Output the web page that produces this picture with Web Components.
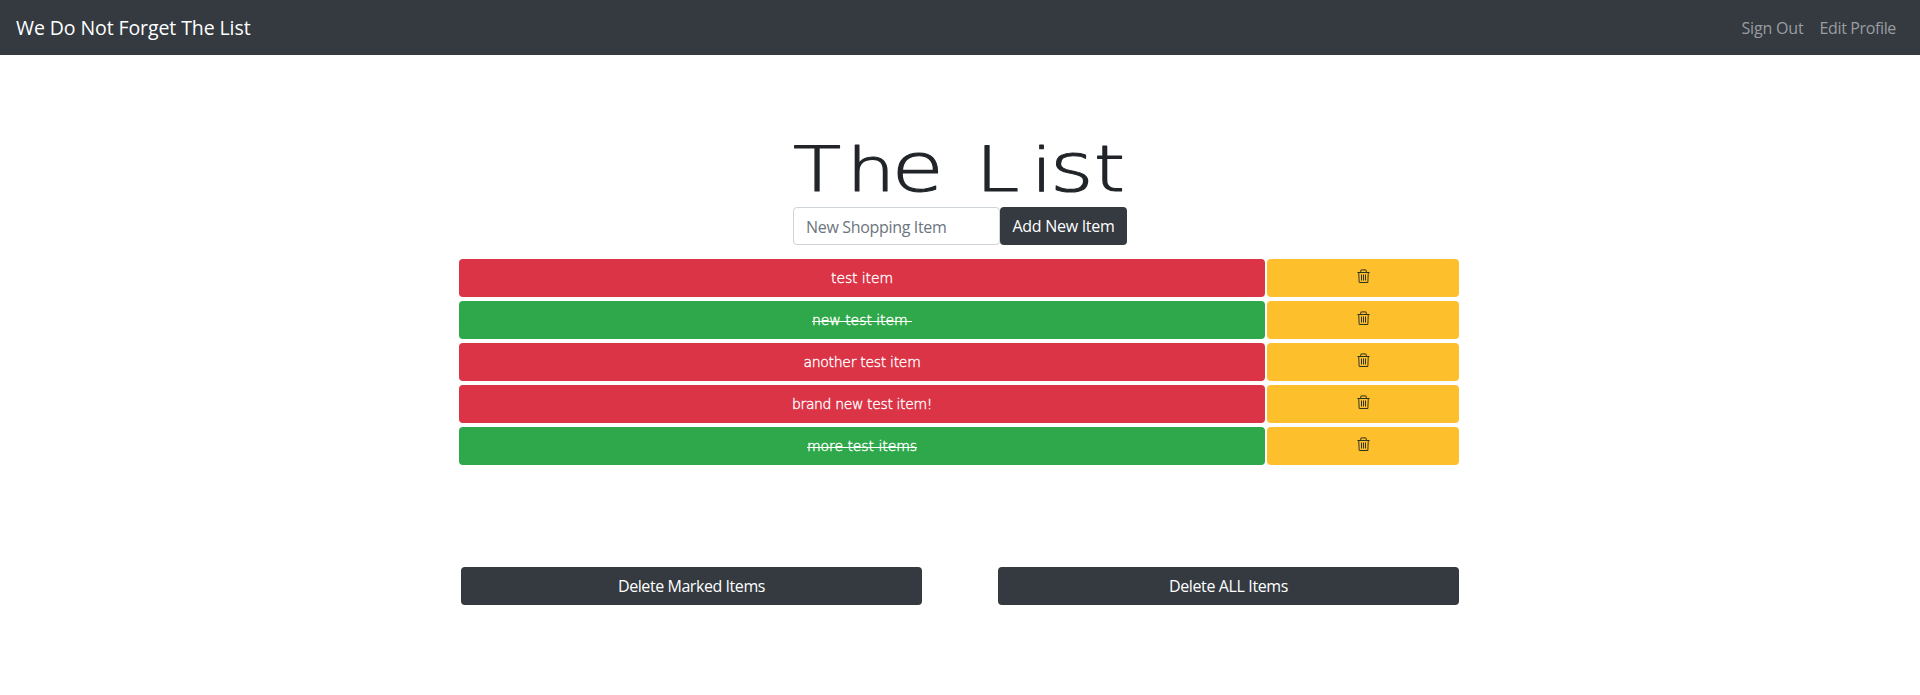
<!DOCTYPE html>
<html lang="en">
<head>
<meta charset="utf-8">
<title>We Do Not Forget The List</title>
<style>
body{margin:0;background:#fff;color:#212529;font:16px/24px "Open Sans","Noto Sans",sans-serif}
</style>
</head>
<body>
<list-app></list-app>
<script>
// Sets letter spacing so that the slotted text occupies a fixed width.
class FitText extends HTMLElement{
  connectedCallback(){
    if(this.shadowRoot)return;
    this.attachShadow({mode:'open'}).innerHTML=`<style>:host{display:inline-block;white-space:pre}span{display:inline-block}</style><span><slot></slot></span>`;
    const s=this.shadowRoot.querySelector('span'),w=+this.getAttribute('w');
    const n=this.textContent.length,natural=s.getBoundingClientRect().width;
    s.style.letterSpacing=((w-natural)/n).toFixed(4)+'px';
  }
}
class NavBar extends HTMLElement{
  constructor(){super();this.attachShadow({mode:'open'}).innerHTML=`<style>
:host{display:flex;box-sizing:border-box;height:55px;padding:0 24px 0 16px;background:#343a40;align-items:center;color:#fff}
.brand{font-size:19.5px;line-height:30px;margin-right:auto}
nav{display:flex;gap:16px;color:#9a9da0}
</style><div class="brand"><fit-text w="234.5">We Do Not Forget The List</fit-text></div>
<nav><fit-text w="62">Sign Out</fit-text><fit-text w="76.5">Edit Profile</fit-text></nav>`}
}
class DarkButton extends HTMLElement{
  constructor(){super();this.attachShadow({mode:'open'}).innerHTML=`<style>
:host{display:block}
button{display:block;box-sizing:border-box;width:100%;height:38px;border:0;border-radius:4px;background:#343a40;color:#fff;font:inherit;padding:0}
</style><button><slot></slot></button>`}
}
class ListTitle extends HTMLElement{
  constructor(){super();this.attachShadow({mode:'open'}).innerHTML=`<style>
:host{display:block}
svg{display:block;overflow:visible}
text{font-family:"DejaVu Sans Light","DejaVu Sans",sans-serif;font-weight:200;fill:#212529;stroke:#212529;stroke-width:1.1;stroke-linejoin:round}
</style><svg width="350" height="100" viewBox="785 116 350 100"><text transform="scale(1.25 1)" y="191.5" font-size="64"><tspan x="634.4" font-size="63">T</tspan><tspan x="677.4" font-size="61">h</tspan><tspan x="713.2" font-size="68">e</tspan> <tspan x="780.4" font-size="63">L</tspan><tspan x="825" font-size="61">i</tspan><tspan x="840" font-size="67">s</tspan><tspan x="875" font-size="64">t</tspan></text></svg>`}
}
class TrashIcon extends HTMLElement{
  constructor(){super();this.attachShadow({mode:'open'}).innerHTML=`<style>:host{display:block}svg{display:block}</style>
<svg width="13" height="15" viewBox="0 0 13 15" fill="none" stroke="#30351f"><path d="M.4 3.5h12.2M2.2 13.5h8.8" stroke-width="1.2"/><path d="M3.6 3V2.2Q3.7.8 5 .8h3Q9.3.8 9.4 2.2V3M1.7 4l.5 9.5M11.3 4l-.5 9.5" stroke="#554c22" stroke-width="1.2"/><path d="M4.5 5.5v6M6.5 5.5v6M8.5 5.5v6"/></svg>`}
}
class ShoppingItem extends HTMLElement{
  connectedCallback(){
    if(this.shadowRoot)return;
    this.attachShadow({mode:'open'}).innerHTML=`<style>
:host{display:grid;grid-template-columns:806px 192px;gap:2px;height:38px}
div{display:flex;align-items:center;justify-content:center;border-radius:4px}
.name{background:#db3447;color:#fff;font:200 14px/20px "DejaVu Sans Light","DejaVu Sans",sans-serif;-webkit-text-stroke:.35px #fff}
:host([done]) .name{background:#2ea84a}
.name fit-text{position:relative}
:host([done]) .name fit-text::after{content:"";position:absolute;left:0;right:0;top:11px;height:1px;background:#fff}
.del{background:#fdc02c}
trash-icon{margin-top:-4px}
</style><div class="name"></div><div class="del"><trash-icon></trash-icon></div>`;
    const f=document.createElement('fit-text');
    f.setAttribute('w',this.getAttribute('w'));
    f.textContent=this.getAttribute('label');
    this.shadowRoot.querySelector('.name').append(f);
  }
}
class ListApp extends HTMLElement{
  constructor(){super();this.attachShadow({mode:'open'}).innerHTML=`<style>
:host{display:block}
main{width:1000px;margin-left:459px;padding-top:61px}
list-title{margin-left:326px}
.add{display:flex;width:334px;margin:-9px 0 14px 334px}
.input{box-sizing:border-box;width:207px;height:38px;border:1px solid #ced4da;border-radius:4px;padding:7px 12px;color:#6c757d}
.add dark-button{width:127px}
.items{display:grid;gap:4px}
.actions{display:grid;grid-template-columns:461px 461px;gap:76px;margin:102px 0 0 2px}
</style><nav-bar></nav-bar><main><list-title></list-title>
<div class="add"><div class="input"><fit-text w="140.5">New Shopping Item</fit-text></div><dark-button><fit-text w="102">Add New Item</fit-text></dark-button></div>
<div class="items">
<shopping-item label="test item" w="62"></shopping-item>
<shopping-item label="new test item " w="100" done></shopping-item>
<shopping-item label="another test item" w="117"></shopping-item>
<shopping-item label="brand new test item!" w="140"></shopping-item>
<shopping-item label="more test items" w="110" done></shopping-item>
</div>
<div class="actions"><dark-button><fit-text w="147">Delete Marked Items</fit-text></dark-button><dark-button><fit-text w="119">Delete ALL Items</fit-text></dark-button></div>
</main>`}
}
customElements.define('nav-bar',NavBar);
customElements.define('dark-button',DarkButton);
customElements.define('list-title',ListTitle);
customElements.define('trash-icon',TrashIcon);
customElements.define('shopping-item',ShoppingItem);
customElements.define('list-app',ListApp);
customElements.define('fit-text',FitText);
</script>
</body>
</html>
